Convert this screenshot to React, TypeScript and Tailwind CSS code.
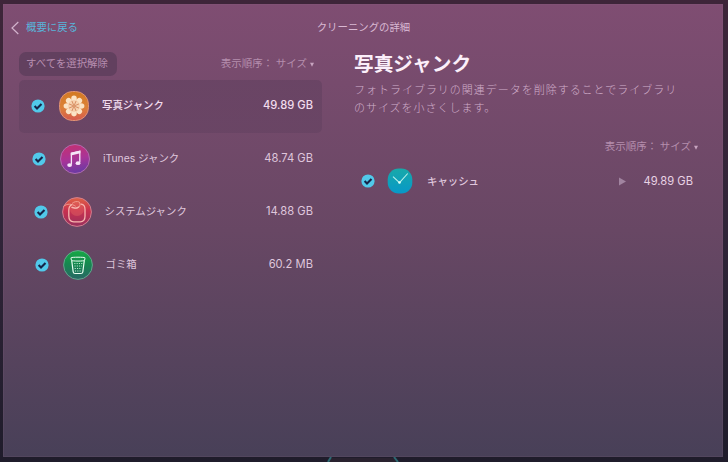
import React from "react";

const FONT = "font-['Inter','Noto_Sans_CJK_JP',sans-serif]";

function Check() {
  return (
    <svg width="14" height="14" viewBox="0 0 14 14" className="block shrink-0">
      <circle cx="7" cy="7" r="6.6" fill="#51c9ea" />
      <path d="M3.6 7 6 9.4 10.5 4.9" fill="none" stroke="#152448" strokeWidth="2.1" />
    </svg>
  );
}

function PhotoIcon() {
  const petals = [0, 45, 90, 135, 180, 225, 270, 315];
  return (
    <svg width="32" height="32" viewBox="0 0 32 32" className="block shrink-0">
      <defs>
        <linearGradient id="photo" x1="0" y1="0" x2="0" y2="1">
          <stop offset="0" stopColor="#d27a22" />
          <stop offset="0.55" stopColor="#dc8238" />
          <stop offset="1" stopColor="#d7594f" />
        </linearGradient>
      </defs>
      <rect x="1.5" y="1.5" width="29" height="29" rx="13" fill="url(#photo)" stroke="#df9275" />
      {petals.map((a) => (
        <ellipse key={a} cx="16" cy="8.9" rx="2.8" ry="3.3" fill="#fbe3c5" transform={`rotate(${a} 16 16)`} />
      ))}
      <circle cx="16" cy="16" r="6" fill="#f6d1ae" />
      {petals.map((a) => (
        <path key={a} d="M16 15V10.5" stroke="#cf7d50" strokeWidth="0.7" transform={`rotate(${a + 22.5} 16 16)`} />
      ))}
      <circle cx="16" cy="16" r="1.6" fill="#dc9a70" />
    </svg>
  );
}

function MusicIcon() {
  return (
    <svg width="32" height="32" viewBox="0 0 32 32" className="block shrink-0">
      <defs>
        <linearGradient id="music" x1="0.4" y1="0" x2="0.6" y2="1">
          <stop offset="0" stopColor="#c43072" />
          <stop offset="0.5" stopColor="#a83498" />
          <stop offset="1" stopColor="#663aa4" />
        </linearGradient>
      </defs>
      <circle cx="16" cy="16" r="14.5" fill="url(#music)" stroke="#b16caf" />
      <path d="M12.4 21.5V10.2L20.8 8.2V19.6" fill="none" stroke="#f5e5f8" strokeWidth="1.3" />
      <path d="M11.8 9.7 21.4 7.5V10.2L11.8 12.4Z" fill="#f5e5f8" />
      <ellipse cx="10.6" cy="22.1" rx="2.4" ry="1.9" fill="#f5e5f8" />
      <ellipse cx="19" cy="20.2" rx="2.4" ry="1.9" fill="#f5e5f8" />
    </svg>
  );
}

function SystemIcon() {
  return (
    <svg width="32" height="32" viewBox="0 0 32 32" className="block shrink-0">
      <defs>
        <linearGradient id="system" x1="0" y1="0" x2="0" y2="1">
          <stop offset="0" stopColor="#df6345" />
          <stop offset="0.45" stopColor="#c9304f" />
          <stop offset="1" stopColor="#98305d" />
        </linearGradient>
      </defs>
      <circle cx="16" cy="16" r="14.4" fill="url(#system)" stroke="#d18090" />
      <circle cx="16" cy="13" r="7" fill="#eb7468" fillOpacity="0.35" />
      <path d="M2.5 10.5C6 7.2 11 7.7 14.7 10.3M11 7.5c2-2 5.2-2.5 7.4-1.4.8 1.2.9 3.4-.5 5.2-2 1.7-4.7 1-6.3-.3" fill="none" stroke="#f3a495" strokeWidth="0.9" />
      <path d="M10.5 8.8C8.3 9.8 7.8 12 7.8 14.6v5.2c0 4 1.5 5.9 5 6h6.4c3.4 0 4.8-2 4.8-5.5v-6.8c0-3-1-5-3.8-5.3M10.9 11.4c2.6 1.1 4.8.9 6.7-.5" fill="none" stroke="#f7b6af" strokeWidth="1.3" strokeLinecap="round" />
    </svg>
  );
}

function TrashIcon() {
  return (
    <svg width="32" height="32" viewBox="0 0 32 32" className="block shrink-0">
      <defs>
        <linearGradient id="trash" x1="0" y1="0" x2="0" y2="1">
          <stop offset="0" stopColor="#16aa45" />
          <stop offset="0.45" stopColor="#15894f" />
          <stop offset="1" stopColor="#296766" />
        </linearGradient>
      </defs>
      <circle cx="16" cy="16" r="14.4" fill="url(#trash)" stroke="#63a68d" />
      <path d="M9 8.8c0-.8 14-.8 14 0 0 .7-.2 1.5-.5 2.6-.5.9-12.500.9-13 0C9.200 10.300 9 9.500 9 8.800Z" fill="none" stroke="#e9fff2" strokeWidth="1" />
      <path d="M9.700 11.500 11.200 23c.2 1.100.7 1.500 1.800 1.500h6c1.100 0 1.600-.4 1.800-1.500l1.500-11.500" fill="none" stroke="#e9fff2" strokeWidth="1.200" />
      <path d="M12.300 14.500h8M12.500 17h7.500M12.700 19.500h7M13 22h6.500" stroke="#b9ebcf" strokeWidth="1.100" strokeDasharray="1.100 1.200" />
    </svg>
  );
}

function CacheIcon() {
  return (
    <svg width="26" height="26" viewBox="0 0 26 26" className="block shrink-0">
      <defs>
        <linearGradient id="cache" x1="0" y1="0" x2="0" y2="1">
          <stop offset="0" stopColor="#18a9a9" />
          <stop offset="1" stopColor="#0798c8" />
        </linearGradient>
      </defs>
      <rect x="0.700" y="0.500" width="24.600" height="25" rx="11" fill="url(#cache)" />
      <path d="M6 8.700 12.500 14.700 20.700 5.500" fill="none" stroke="#b5efe8" strokeWidth="1.100" />
      <circle cx="12.500" cy="14.500" r="1.300" fill="#dcfff8" />
    </svg>
  );
}

function SortLabel() {
  return (
    <div className="flex items-center whitespace-nowrap text-[10.5px] leading-4 text-[#b58ead]">
      <span className="w-[55px]">表示順序：</span>
      <span>サイズ</span>
      <svg width="4" height="5" viewBox="0 0 4 5" className="ml-[3px] mt-px">
        <path d="M0 .7H4L2 4.700Z" fill="#c8a4bf" />
      </svg>
    </div>
  );
}

const rows = [
  { icon: <PhotoIcon />, name: "写真ジャンク", size: "49.89 GB", pad: "pl-[12px]", tone: "font-medium text-[#f1dcee]" },
  { icon: <MusicIcon />, name: "iTunes ジャンク", size: "48.74 GB", pad: "pl-[13px]", tone: "text-[#dfc6dc]" },
  { icon: <SystemIcon />, name: "システムジャンク", size: "14.88 GB", pad: "pl-[14.5px]", tone: "text-[#dfc6dc]" },
  { icon: <TrashIcon />, name: "ゴミ箱", size: "60.2 MB", pad: "pl-[15.5px]", tone: "text-[#dfc6dc]" },
];

export default function App() {
  return (
    <div className={`relative h-[462px] w-[728px] overflow-hidden bg-linear-to-b from-[#3e2539] via-[#302438] to-[#1f1c2b] pl-[3px] pr-[5px] pt-[4px] ${FONT}`}>
      <main className="flex h-[453px] flex-col bg-linear-to-b from-[#7f4d72] via-[#684764] via-50% to-[#484058] px-px pt-px shadow-[inset_0_0_0_1px_#8b6b8426]">
        <header className="grid h-[44px] grid-cols-[1fr_auto_1fr] items-center pl-[7px] pr-[6px] pt-px text-[10.4px] leading-4">
          <button className="flex items-center gap-[7px] text-[#58b5db]">
            <svg width="8" height="14" viewBox="0 0 8 14">
              <path d="M7.300 1 1 7l6.300 6" fill="none" stroke="#d3b3cd" strokeWidth="1.200" />
            </svg>
            概要に戻る
          </button>
          <h1 className="text-[#d9b8d3]">クリーニングの詳細</h1>
          <span />
        </header>
        <div className="flex min-h-0 flex-1">
          <section className="w-[318px] pl-[15px]">
            <div className="flex h-[31px] items-start justify-between pr-[8px] pt-[3px]">
              <button className="h-[24px] w-[98px] whitespace-nowrap rounded-[7px] bg-[#62405f] pr-[2px] text-[10.4px] text-[#b88eb0]">すべてを選択解除</button>
              <div className="pt-[4px]"><SortLabel /></div>
            </div>
            <ul>
              {rows.map((r, i) => (
                <li key={r.name} className={`flex h-[53px] items-center pb-[2px] pr-[9px] ${r.pad} ${i === 0 ? "rounded-[5px] bg-linear-to-b from-[#61405f99] to-[#61405f80]" : ""}`}>
                  <Check />
                  <div className="ml-[13px]">{r.icon}</div>
                  <span className={`ml-[12px] flex-1 whitespace-nowrap text-[10.4px] ${r.tone}`}>{r.name}</span>
                  <span className={`text-[11.200px] ${r.tone}`}>{r.size}</span>
                </li>
              ))}
            </ul>
          </section>
          <section className="flex-1 pl-[32px]">
            <h2 className="pt-px text-[19.700px] font-bold leading-[28px] text-[#fbeffa]">写真ジャンク</h2>
            <p className="mt-[4px] whitespace-nowrap text-[11px] font-light leading-[17.500px] tracking-[0.98px] text-[#d0adca]">
              フォトライブラリの関連データを削除することでライブラリ<br />のサイズを小さくします。
            </p>
            <div className="mt-[22px] flex justify-end pr-[24px]"><SortLabel /></div>
            <div className="mt-[13px] flex h-[26px] items-center pl-[7px] pr-[29px]">
              <Check />
              <div className="ml-[12px]"><CacheIcon /></div>
              <span className="ml-[14px] flex-1 pt-px text-[10.4px] font-medium text-[#dfc6dc]">キャッシュ</span>
              <svg width="7" height="9" viewBox="0 0 7 9" className="mr-[17px]"><path d="M0 .5 7 4.500 0 8.500Z" fill="#a184a0" /></svg>
              <span className="text-[11.200px] text-[#e8d2e4]">49.89 GB</span>
            </div>
          </section>
        </div>
      </main>
      <svg className="absolute bottom-0 left-[325px]" width="76" height="5" viewBox="0 0 76 5">
        <path d="M6 1H69L73 5H3Z" fill="#29222f" />
        <path d="M3 5 6 0M73 5 69 0" stroke="#2c6872" strokeWidth="2" />
      </svg>
    </div>
  );
}
